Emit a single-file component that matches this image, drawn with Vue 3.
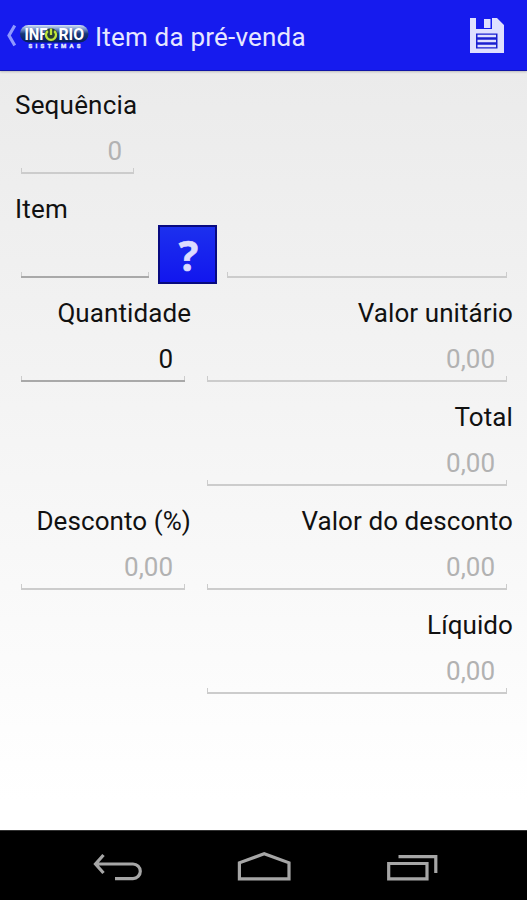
<script setup>
const rows = [
  [{ label: 'Quantidade', value: '0', active: true }, { label: 'Valor unitário', value: '0,00' }],
  [null, { label: 'Total', value: '0,00' }],
  [{ label: 'Desconto (%)', value: '0,00' }, { label: 'Valor do desconto', value: '0,00' }],
  [null, { label: 'Líquido', value: '0,00' }],
]
</script>

<template>
  <div class="screen">
    <header class="bar">
      <svg class="up" width="10" height="24" viewBox="0 0 10 24">
        <path d="M8.8 1.5 L3 11.5 L8.8 21.5" fill="none" stroke="#8f98ff" stroke-width="3.2" />
      </svg>
      <svg class="logo" width="70" height="28" viewBox="0 0 70 28">
        <defs>
          <linearGradient id="pill" x1="0" y1="0" x2="0" y2="1">
            <stop offset="0" stop-color="#d5e2f6" />
            <stop offset="0.22" stop-color="#7e9bd2" />
            <stop offset="0.5" stop-color="#163779" />
            <stop offset="1" stop-color="#071d5c" />
          </linearGradient>
        </defs>
        <rect x="0" y="1" width="68.5" height="17.5" rx="8.5" fill="url(#pill)" />
        <g class="brand">
          <text x="4.5" y="15.8" textLength="23" lengthAdjust="spacingAndGlyphs">INF</text>
          <text x="38.5" y="15.8" textLength="25.5" lengthAdjust="spacingAndGlyphs">RIO</text>
        </g>
        <circle cx="31" cy="10.8" r="6.6" fill="#263f35" />
        <path d="M27.8 7 A5 5 0 1 0 34.2 7 M31 4.5 V11" fill="none" stroke="#bfe63b" stroke-width="2.3" />
        <text class="sub" x="8.5" y="24.3" textLength="52">SISTEMAS</text>
      </svg>
      <h1>Item da pré-venda</h1>
      <svg class="save" width="34" height="35" viewBox="0 0 34 35">
        <path d="M0 0 H6 V11 H22 V0 H27 L34 7 V35 H0 Z" fill="#dfe0ff" />
        <rect x="14" y="1" width="6.5" height="9" fill="#dfe0ff" />
        <rect x="6" y="15.5" width="21.5" height="15" fill="#1a1fd0" />
        <path d="M7.5 18 H26 M7.5 23 H26 M7.5 28 H26" stroke="#dfe0ff" stroke-width="2.5" />
      </svg>
    </header>

    <main class="form">
      <section class="block">
        <label>Sequência</label>
        <div class="field seq">0</div>
      </section>
      <section class="block">
        <label>Item</label>
        <div class="lookup">
          <div class="field code active"></div>
          <button class="ask">?</button>
          <div class="field name"></div>
        </div>
      </section>
      <section v-for="(row, i) in rows" :key="i" class="pair">
        <div v-for="(cell, j) in row" :key="j" class="cell">
          <template v-if="cell">
            <label>{{ cell.label }}</label>
            <div class="field" :class="{ active: cell.active }">{{ cell.value }}</div>
          </template>
        </div>
      </section>
    </main>

    <nav class="nav">
      <svg width="50" height="30" viewBox="0 0 50 30">
        <path d="M10.5 3 L2.5 12 L10.5 21 M2.5 12 H40 A7.3 7.3 0 0 1 40 26.6 H22" />
      </svg>
      <svg width="54" height="30" viewBox="0 0 54 30">
        <path d="M2.4 26.9 V10.8 L27.2 1.8 L52 10.8 V26.9 Z" />
      </svg>
      <svg width="54" height="30" viewBox="0 0 54 30">
        <path d="M3.7 11.5 H42 V26.9 H3.7 Z M13.5 4.7 H50.8 V21" />
      </svg>
    </nav>
  </div>
</template>

<style>
body {
  margin: 0;
}
</style>

<style scoped>
.screen {
  width: 527px;
  height: 900px;
  display: flex;
  flex-direction: column;
  overflow: hidden;
  font-family: Roboto, sans-serif;
  font-size: 26px;
  color: #111;
  background: linear-gradient(#ebebeb 70px, #f1f1f1 300px, #fff 800px);
}
.bar {
  box-sizing: border-box;
  height: 71px;
  flex: none;
  display: flex;
  align-items: center;
  padding: 1px 23px 0 6px;
  background: #161bee;
  border-bottom: 1px solid #1014a8;
  box-shadow: 0 1px 2px #bbb;
}
.up {
  margin-right: 4px;
}
.logo {
  margin-top: 4px;
}
.brand {
  font-size: 16px;
  font-weight: 700;
  fill: #fff;
}
.sub {
  font-size: 6px;
  font-weight: 700;
  fill: #e2e7ff;
  stroke: #e2e7ff;
  stroke-width: 0.4px;
}
h1 {
  flex: 1;
  margin: 3px 0 0 5px;
  font-size: 26px;
  font-weight: 400;
  line-height: 34px;
  letter-spacing: 0.2px;
  color: #e6e7ff;
  white-space: nowrap;
}
.form {
  flex: 1;
  padding: 16px 14px 0 15px;
}
.block,
.pair {
  height: 104px;
}
.block label {
  letter-spacing: 0.2px;
}
.pair {
  display: grid;
  grid-template-columns: 176px 1fr;
  column-gap: 10px;
  text-align: right;
}
label {
  display: block;
  height: 36px;
  line-height: 36px;
  letter-spacing: 0.08px;
  white-space: nowrap;
}
.field {
  box-sizing: border-box;
  height: 51px;
  margin: 0 6px;
  padding-right: 12px;
  line-height: 57px;
  text-align: right;
  color: #b2b2b2;
  border-bottom: 2px solid #ccc;
  background:
    linear-gradient(#ccc, #ccc) left bottom / 1px 4px no-repeat,
    linear-gradient(#ccc, #ccc) right bottom / 1px 4px no-repeat;
}
.field.active {
  color: #111;
  border-color: #a9a9a9;
}
.seq {
  width: 113px;
}
.lookup {
  display: flex;
  align-items: flex-start;
}
.code {
  width: 128px;
  margin-right: 9px;
}
.ask {
  box-sizing: border-box;
  width: 59px;
  height: 59px;
  margin: -2px 10px 0 0;
  padding: 0 0 0 2px;
  border: 2px solid #080a80;
  background: linear-gradient(#1c30ee, #1216ee);
  color: #dcdcff;
  font: 700 41px/50px "Open Sans", sans-serif;
  -webkit-text-stroke: 0.6px #dcdcff;
}
.name {
  flex: 1;
  margin-left: 0;
}
.nav {
  box-sizing: border-box;
  height: 70px;
  flex: none;
  display: flex;
  gap: 94px;
  padding: 22px 0 0 93px;
  background: #000;
  border-top: 1px solid #333;
}
.nav svg {
  margin-top: -1px;
  fill: none;
  stroke: #a6a6a6;
  stroke-width: 3.2;
}
</style>
